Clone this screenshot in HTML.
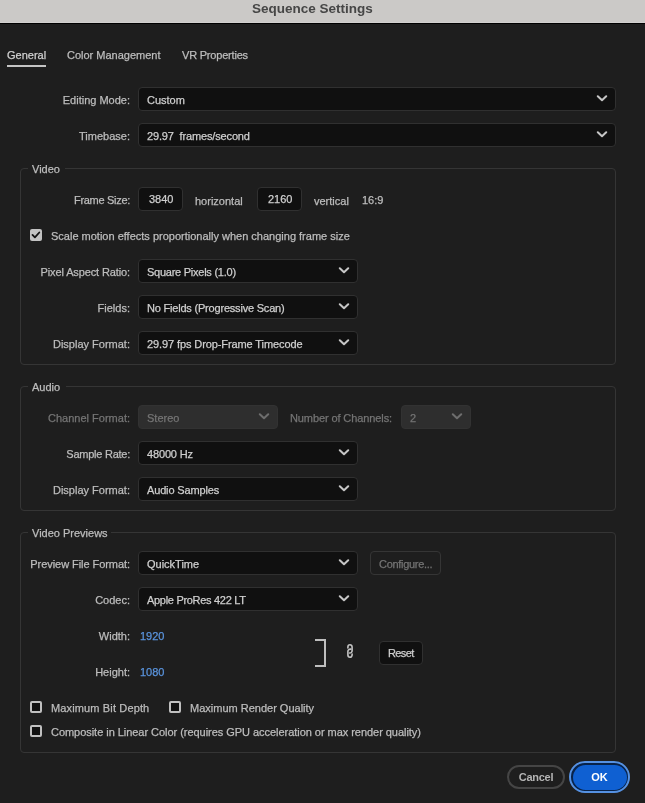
<!DOCTYPE html>
<html><head><meta charset="utf-8"><title>Sequence Settings</title><style>
*{margin:0;padding:0;box-sizing:border-box}
html,body{width:645px;height:803px;overflow:hidden;background:#1e1e1e;font-family:"Liberation Sans",sans-serif;-webkit-font-smoothing:antialiased}
body{will-change:transform}
.t{position:absolute;font-size:11px;line-height:13px;white-space:nowrap;-webkit-text-stroke:0.25px currentColor}
.tt{position:absolute;font-size:13.5px;font-weight:700;line-height:15px;color:#464646;white-space:nowrap}
#tb{position:absolute;left:0;top:0;width:645px;height:22px;background:#cbc9c7}
#tbl{position:absolute;left:0;top:22px;width:645px;height:1px;background:#d2d0cf}
#tbk{position:absolute;left:0;top:23px;width:645px;height:1px;background:#000}
.dd{position:absolute;background:#101010;border:1px solid #303030;border-radius:4px}
.dd.dis{background:#2e2e2e;border-color:#323232}
.btn2{position:absolute;border:1px solid #353535;border-radius:4px}
.ch{position:absolute}
.grp{position:absolute;border:1px solid #353535;border-radius:4px}
.gap{position:absolute;background:#1e1e1e}
.cbon{position:absolute;width:12px;height:12px;background:#c2c2c2;border-radius:2px}
.cbon svg{position:absolute;left:0;top:0}
.cboff{position:absolute;width:12px;height:12px;background:#111;border:2px solid #c0c0c0;border-radius:2px}
#cancel{position:absolute;left:507px;top:765px;width:58px;height:24px;border:2px solid #454545;border-radius:12px;color:#b4b4b4;font-size:11px;font-weight:700;line-height:20px;text-align:center;letter-spacing:-0.25px}
#okring{position:absolute;left:569px;top:761px;width:61px;height:32px;border:2px solid #5591e2;border-radius:16px;background:#08234a}
#ok{position:absolute;left:572.5px;top:764.5px;width:54px;height:25px;background:#0f60d2;border-radius:12.5px;color:#fff;font-size:11px;font-weight:700;line-height:25px;text-align:center}
</style></head><body>
<div id="tb"></div><div id="tbl"></div><div id="tbk"></div>
<div class="tt" style="left:252px;top:1px">Sequence Settings</div>
<div class="t" style="left:7px;top:49px;color:#cfcfcf;">General</div>
<div style="position:absolute;left:7px;top:65px;width:39px;height:2px;background:#c4c4c4"></div>
<div class="t" style="left:67px;top:49px;color:#bdbdbd;">Color Management</div>
<div class="t" style="left:182px;top:49px;color:#bdbdbd;letter-spacing:-0.2px">VR Properties</div>
<div class="t" style="right:515px;top:94px;color:#bdbdbd;">Editing Mode:</div>
<div class="dd" style="left:138px;top:87px;width:478px;height:24px"></div>
<div class="t" style="left:147px;top:94px;color:#cfcfcf;letter-spacing:0px">Custom</div>
<svg class="ch" style="left:596px;top:95px" width="12" height="8" viewBox="0 0 12 8"><polyline points="1.8,1.2 6,5.2 10.2,1.2" fill="none" stroke="#c6c6c6" stroke-width="2" stroke-linecap="round" stroke-linejoin="round"/></svg>
<div class="t" style="right:515px;top:130px;color:#bdbdbd;">Timebase:</div>
<div class="dd" style="left:138px;top:123px;width:478px;height:24px"></div>
<div class="t" style="left:147px;top:130px;color:#cfcfcf;letter-spacing:0px"><span style="letter-spacing:-0.15px">29.97&nbsp; frames/second</span></div>
<svg class="ch" style="left:596px;top:131px" width="12" height="8" viewBox="0 0 12 8"><polyline points="1.8,1.2 6,5.2 10.2,1.2" fill="none" stroke="#c6c6c6" stroke-width="2" stroke-linecap="round" stroke-linejoin="round"/></svg>
<div class="grp" style="left:20px;top:168px;width:596px;height:197px"></div>
<div class="gap" style="left:28px;top:166px;width:37px;height:5px"></div>
<div class="t" style="left:32px;top:163px;color:#bdbdbd;">Video</div>
<div class="t" style="right:515px;top:194px;color:#bdbdbd;letter-spacing:-0.3px">Frame Size:</div>
<div class="dd" style="left:138px;top:187px;width:45px;height:24px"></div>
<div class="t" style="left:149px;top:193px;color:#cfcfcf;">3840</div>
<div class="t" style="left:195px;top:195px;color:#bdbdbd;">horizontal</div>
<div class="dd" style="left:257px;top:187px;width:45px;height:24px"></div>
<div class="t" style="left:268px;top:193px;color:#cfcfcf;">2160</div>
<div class="t" style="left:314px;top:195px;color:#bdbdbd;">vertical</div>
<div class="t" style="left:362px;top:194px;color:#bdbdbd;">16:9</div>
<div class="cbon" style="left:30px;top:229px"><svg width="12" height="12" viewBox="0 0 12 12"><polyline points="2.5,5.9 4.9,8.3 9.3,3.5" fill="none" stroke="#111" stroke-width="1.8" stroke-linecap="round" stroke-linejoin="round"/></svg></div>
<div class="t" style="left:51px;top:230px;color:#bdbdbd;">Scale motion effects proportionally when changing frame size</div>
<div class="t" style="right:515px;top:266px;color:#bdbdbd;letter-spacing:-0.12px">Pixel Aspect Ratio:</div>
<div class="dd" style="left:138px;top:259px;width:220px;height:24px"></div>
<div class="t" style="left:147px;top:266px;color:#cfcfcf;letter-spacing:-0.25px">Square Pixels (1.0)</div>
<svg class="ch" style="left:338px;top:267px" width="12" height="8" viewBox="0 0 12 8"><polyline points="1.8,1.2 6,5.2 10.2,1.2" fill="none" stroke="#c6c6c6" stroke-width="2" stroke-linecap="round" stroke-linejoin="round"/></svg>
<div class="t" style="right:515px;top:302px;color:#bdbdbd;">Fields:</div>
<div class="dd" style="left:138px;top:295px;width:220px;height:24px"></div>
<div class="t" style="left:147px;top:302px;color:#cfcfcf;letter-spacing:-0.2px">No Fields (Progressive Scan)</div>
<svg class="ch" style="left:338px;top:303px" width="12" height="8" viewBox="0 0 12 8"><polyline points="1.8,1.2 6,5.2 10.2,1.2" fill="none" stroke="#c6c6c6" stroke-width="2" stroke-linecap="round" stroke-linejoin="round"/></svg>
<div class="t" style="right:515px;top:338px;color:#bdbdbd;">Display Format:</div>
<div class="dd" style="left:138px;top:331px;width:220px;height:24px"></div>
<div class="t" style="left:147px;top:338px;color:#cfcfcf;letter-spacing:-0.1px">29.97 fps Drop-Frame Timecode</div>
<svg class="ch" style="left:338px;top:339px" width="12" height="8" viewBox="0 0 12 8"><polyline points="1.8,1.2 6,5.2 10.2,1.2" fill="none" stroke="#c6c6c6" stroke-width="2" stroke-linecap="round" stroke-linejoin="round"/></svg>
<div class="grp" style="left:20px;top:386px;width:596px;height:125px"></div>
<div class="gap" style="left:28px;top:384px;width:38px;height:5px"></div>
<div class="t" style="left:32px;top:381px;color:#bdbdbd;">Audio</div>
<div class="t" style="right:515px;top:412px;color:#747474;">Channel Format:</div>
<div class="dd dis" style="left:138px;top:405px;width:140px;height:24px"></div>
<div class="t" style="left:147px;top:412px;color:#747474;">Stereo</div>
<svg class="ch" style="left:258px;top:413px" width="12" height="8" viewBox="0 0 12 8"><polyline points="1.8,1.2 6,5.2 10.2,1.2" fill="none" stroke="#6e6e6e" stroke-width="2" stroke-linecap="round" stroke-linejoin="round"/></svg>
<div class="t" style="right:253px;top:412px;color:#747474;letter-spacing:-0.1px">Number of Channels:</div>
<div class="dd dis" style="left:401px;top:405px;width:70px;height:24px"></div>
<div class="t" style="left:410px;top:412px;color:#747474;">2</div>
<svg class="ch" style="left:451px;top:413px" width="12" height="8" viewBox="0 0 12 8"><polyline points="1.8,1.2 6,5.2 10.2,1.2" fill="none" stroke="#6e6e6e" stroke-width="2" stroke-linecap="round" stroke-linejoin="round"/></svg>
<div class="t" style="right:515px;top:448px;color:#bdbdbd;letter-spacing:-0.25px">Sample Rate:</div>
<div class="dd" style="left:138px;top:441px;width:220px;height:24px"></div>
<div class="t" style="left:147px;top:448px;color:#cfcfcf;letter-spacing:-0.15px">48000 Hz</div>
<svg class="ch" style="left:338px;top:449px" width="12" height="8" viewBox="0 0 12 8"><polyline points="1.8,1.2 6,5.2 10.2,1.2" fill="none" stroke="#c6c6c6" stroke-width="2" stroke-linecap="round" stroke-linejoin="round"/></svg>
<div class="t" style="right:515px;top:484px;color:#bdbdbd;">Display Format:</div>
<div class="dd" style="left:138px;top:477px;width:220px;height:24px"></div>
<div class="t" style="left:147px;top:484px;color:#cfcfcf;letter-spacing:-0.15px">Audio Samples</div>
<svg class="ch" style="left:338px;top:485px" width="12" height="8" viewBox="0 0 12 8"><polyline points="1.8,1.2 6,5.2 10.2,1.2" fill="none" stroke="#c6c6c6" stroke-width="2" stroke-linecap="round" stroke-linejoin="round"/></svg>
<div class="grp" style="left:20px;top:532px;width:596px;height:221px"></div>
<div class="gap" style="left:28px;top:530px;width:83px;height:5px"></div>
<div class="t" style="left:32px;top:527px;color:#bdbdbd;">Video Previews</div>
<div class="t" style="right:515px;top:558px;color:#bdbdbd;letter-spacing:-0.06px">Preview File Format:</div>
<div class="dd" style="left:138px;top:551px;width:220px;height:24px"></div>
<div class="t" style="left:147px;top:558px;color:#cfcfcf;letter-spacing:0px">QuickTime</div>
<svg class="ch" style="left:338px;top:559px" width="12" height="8" viewBox="0 0 12 8"><polyline points="1.8,1.2 6,5.2 10.2,1.2" fill="none" stroke="#c6c6c6" stroke-width="2" stroke-linecap="round" stroke-linejoin="round"/></svg>
<div class="btn2" style="left:370px;top:551px;width:71px;height:24px"></div>
<div class="t" style="left:379px;top:558px;color:#747474;letter-spacing:-0.3px">Configure...</div>
<div class="t" style="right:515px;top:594px;color:#bdbdbd;">Codec:</div>
<div class="dd" style="left:138px;top:587px;width:220px;height:24px"></div>
<div class="t" style="left:147px;top:594px;color:#cfcfcf;letter-spacing:-0.3px">Apple ProRes 422 LT</div>
<svg class="ch" style="left:338px;top:595px" width="12" height="8" viewBox="0 0 12 8"><polyline points="1.8,1.2 6,5.2 10.2,1.2" fill="none" stroke="#c6c6c6" stroke-width="2" stroke-linecap="round" stroke-linejoin="round"/></svg>
<div class="t" style="right:515px;top:630px;color:#bdbdbd;">Width:</div>
<div class="t" style="left:140px;top:630px;color:#5a94de;">1920</div>
<div class="t" style="right:515px;top:666px;color:#bdbdbd;">Height:</div>
<div class="t" style="left:140px;top:666px;color:#5a94de;">1080</div>
<svg style="position:absolute;left:310px;top:634px" width="20" height="38" viewBox="0 0 20 38"><polyline points="5,6 15,6 15,32 5,32" fill="none" stroke="#bebebe" stroke-width="2"/></svg>
<svg style="position:absolute;left:343px;top:641px" width="14" height="20" viewBox="0 0 14 20"><path d="M4.9 7.0 L4.9 5.9 A2.1 2.1 0 0 1 9.1 5.9 L9.1 9.8 C9.1 11.3 7.9 12.1 6.6 12.0" fill="none" stroke="#c4c4c4" stroke-width="1.6" stroke-linecap="round"/><path d="M9.1 13.0 L9.1 14.1 A2.1 2.1 0 0 1 4.9 14.1 L4.9 10.2 C4.9 8.7 6.3 8.0 7.8 8.1" fill="none" stroke="#c4c4c4" stroke-width="1.6" stroke-linecap="round"/></svg>
<div class="dd" style="left:379px;top:641px;width:44px;height:24px"></div>
<div class="t" style="left:388px;top:647px;color:#cfcfcf;letter-spacing:-0.6px">Reset</div>
<div class="cboff" style="left:30px;top:701px"></div>
<div class="t" style="left:51px;top:702px;color:#bdbdbd;letter-spacing:0.14px">Maximum Bit Depth</div>
<div class="cboff" style="left:169px;top:701px"></div>
<div class="t" style="left:190px;top:702px;color:#bdbdbd;">Maximum Render Quality</div>
<div class="cboff" style="left:30px;top:725px"></div>
<div class="t" style="left:51px;top:726px;color:#bdbdbd;letter-spacing:-0.04px">Composite in Linear Color (requires GPU acceleration or max render quality)</div>
<div id="cancel">Cancel</div>
<div id="okring"></div><div id="ok">OK</div>
</body></html>
